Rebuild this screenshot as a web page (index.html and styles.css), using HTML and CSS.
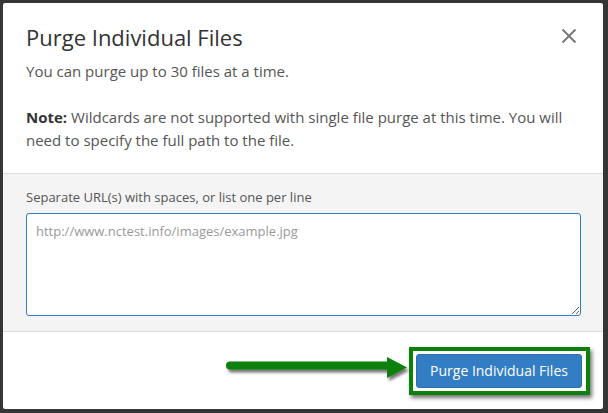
FILE: index.html
```html
<!DOCTYPE html>
<html lang="en">
<head>
    <meta charset="UTF-8">
    <meta name="viewport" content="width=device-width, initial-scale=1.0">
    <title>Purge Individual Files</title>
    <link rel="stylesheet" href="styles.css">
</head>
<body>
    <div class="modal">
        <div class="modal-header">
            <h2 class="modal-title">Purge Individual Files</h2>
            <button type="button" class="close" aria-label="Close">
                <svg width="16" height="14" viewBox="0 0 16 14"><path d="M1.5 0.5 L14.5 13.5 M14.5 0.5 L1.5 13.5" stroke="#777" stroke-width="2" fill="none"/></svg>
            </button>
        </div>
        <div class="modal-intro">
            <p class="limit">You can purge up to 30 files at a time.</p>
            <p><strong>Note:</strong> Wildcards are not supported with single file purge at this time. You will need to specify the full path to the file.</p>
        </div>
        <div class="modal-body">
            <label for="urls">Separate URL(s) with spaces, or list one per line</label>
            <textarea id="urls" placeholder="http://www.nctest.info/images/example.jpg"></textarea>
        </div>
        <div class="modal-footer">
            <svg class="arrow" width="186" height="30" viewBox="0 0 186 30">
                <defs>
                    <filter id="shadow" x="-10%" y="-50%" width="120%" height="200%">
                        <feDropShadow dx="2" dy="3" stdDeviation="1.5" flood-color="#000" flood-opacity="0.55"/>
                    </filter>
                </defs>
                <g filter="url(#shadow)" fill="#0b800b">
                    <path d="M7 10.5 L168 10.5" stroke="#0b800b" stroke-width="8" stroke-linecap="round"/>
                    <polygon points="164,2 184,12.5 164,23"/>
                </g>
            </svg>
            <div class="highlight">
                <button type="button" class="btn-primary">Purge Individual Files</button>
            </div>
        </div>
    </div>
</body>
</html>
```

FILE: styles.css
```css
body { margin: 0; background: #363636; font-family: "Open Sans", "Liberation Sans", sans-serif; height: 413px; overflow: hidden; }
.modal { margin: 3px 0 0 3px; width: 600px; background: #fff; border-radius: 2px; }
.modal-header { display: flex; justify-content: space-between; align-items: flex-start; padding: 22px 26px 0 23px; }
.modal-title { margin: 0; font-size: 22px; font-weight: normal; line-height: 24px; color: #333; }
.close { margin-top: 4px; padding: 0; border: none; background: none; line-height: 0; cursor: pointer; }
.modal-intro { padding: 11px 26px 21px 23px; font-size: 15px; line-height: 23px; color: #555; }
.modal-intro p { margin: 0; }
.modal-intro .limit { margin-bottom: 23px; }
.modal-intro strong { color: #333; }
.modal-body { display: flex; flex-direction: column; padding: 15px 22px 15px 23px; background: #f4f4f4; border-top: 1px solid #ddd; border-bottom: 1px solid #ddd; }
.modal-body label { font-size: 13px; line-height: 17px; color: #555; margin-bottom: 7px; }
.modal-body textarea { box-sizing: border-box; height: 103px; padding: 7px 9px 4px; border: 1px solid #2f7dcb; border-radius: 3px; font-family: inherit; font-size: 13px; line-height: 20px; color: #333; resize: both; outline: none; }
.modal-body textarea::placeholder { color: #999; }
.modal-footer { display: flex; justify-content: flex-end; align-items: center; height: 77px; padding-right: 13px; }
.arrow { display: block; margin-top: -1px; }
.highlight { padding: 3px 4px 3px 3px; border: 4px solid #0b800b; background: #fff; box-shadow: 2px 3px 4px rgba(0, 0, 0, 0.55); }
.btn-primary { display: block; width: 166px; height: 34px; padding: 0; border: 1px solid #2c6fae; border-radius: 3px; background: #337dc4; color: #fff; font-family: inherit; font-size: 14px; cursor: pointer; }
```
